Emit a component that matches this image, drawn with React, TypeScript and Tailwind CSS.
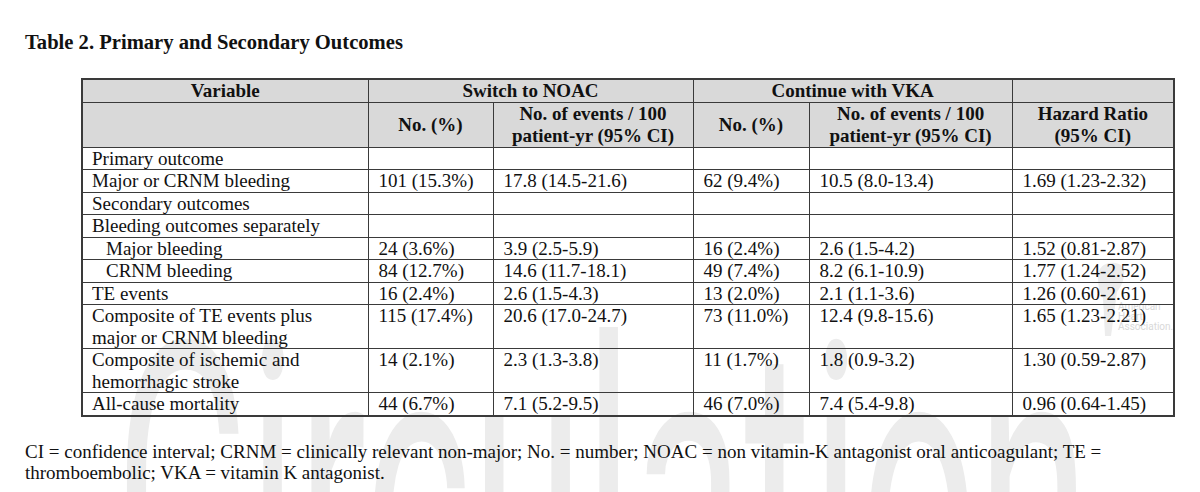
const rows: { label: string[]; indent?: boolean; vals: string[] }[] = [
  { label: ["Primary outcome"], vals: ["", "", "", "", ""] },
  { label: ["Major or CRNM bleeding"], vals: ["101 (15.3%)", "17.8 (14.5-21.6)", "62 (9.4%)", "10.5 (8.0-13.4)", "1.69 (1.23-2.32)"] },
  { label: ["Secondary outcomes"], vals: ["", "", "", "", ""] },
  { label: ["Bleeding outcomes separately"], vals: ["", "", "", "", ""] },
  { label: ["Major bleeding"], indent: true, vals: ["24 (3.6%)", "3.9 (2.5-5.9)", "16 (2.4%)", "2.6 (1.5-4.2)", "1.52 (0.81-2.87)"] },
  { label: ["CRNM bleeding"], indent: true, vals: ["84 (12.7%)", "14.6 (11.7-18.1)", "49 (7.4%)", "8.2 (6.1-10.9)", "1.77 (1.24-2.52)"] },
  { label: ["TE events"], vals: ["16 (2.4%)", "2.6 (1.5-4.3)", "13 (2.0%)", "2.1 (1.1-3.6)", "1.26 (0.60-2.61)"] },
  { label: ["Composite of TE events plus", "major or CRNM bleeding"], vals: ["115 (17.4%)", "20.6 (17.0-24.7)", "73 (11.0%)", "12.4 (9.8-15.6)", "1.65 (1.23-2.21)"] },
  { label: ["Composite of ischemic and", "hemorrhagic stroke"], vals: ["14 (2.1%)", "2.3 (1.3-3.8)", "11 (1.7%)", "1.8 (0.9-3.2)", "1.30 (0.59-2.87)"] },
  { label: ["All-cause mortality"], vals: ["44 (6.7%)", "7.1 (5.2-9.5)", "46 (7.0%)", "7.4 (5.4-9.8)", "0.96 (0.64-1.45)"] },
];

export default function App() {
  return (
    <div className="relative w-[1200px] h-[492px] overflow-hidden bg-white text-[#111] font-['Liberation_Serif']">
      {/* watermark */}
      <div className="pointer-events-none absolute left-[115px] top-[291px] origin-left scale-x-[0.51] whitespace-nowrap font-['Roboto'] text-[400px] leading-none text-[#ececec]">
        Circulation
      </div>
      {/* AHA logo watermark */}
      <svg className="pointer-events-none absolute left-[1092px] top-[258px]" width="36" height="80" viewBox="0 0 36 80">
        <path d="M6 18 C6 7 17 2 27 6 C35 10 33 24 25 34 L19 78 L13 78 L11 40 C7 34 6 27 6 18 Z" fill="#ececec" />
      </svg>
      <div className="pointer-events-none absolute left-[1118px] top-[302px] font-['Roboto'] text-[10px] leading-[10px] text-[#d9d9d9]">
        American
        <br />
        Heart
        <br />
        Association.
      </div>

      <div className="relative pl-[25px] pt-[30px]">
        <h1 className="text-[20.6px] font-bold leading-[24px]">Table 2. Primary and Secondary Outcomes</h1>

        <table className="ml-[56px] mt-[24px] w-[1092px] table-fixed border-collapse border-2 border-[#3a3a3a] text-[19px] leading-[21.5px]">
          <colgroup>
            <col className="w-[286px]" />
            <col className="w-[125px]" />
            <col className="w-[200px]" />
            <col className="w-[116px]" />
            <col className="w-[203px]" />
            <col className="w-[162px]" />
          </colgroup>
          <thead className="bg-[#d9d9d9]">
            <tr className="h-[23px]">
              <th className="border border-[#3a3a3a] p-0 font-bold">Variable</th>
              <th colSpan={2} className="border border-[#3a3a3a] p-0 font-bold">Switch to NOAC</th>
              <th colSpan={2} className="border border-[#3a3a3a] p-0 font-bold">Continue with VKA</th>
              <th className="border border-[#3a3a3a] p-0"></th>
            </tr>
            <tr className="h-[45px]">
              <th className="border border-[#3a3a3a] p-0"></th>
              <th className="border border-[#3a3a3a] p-0 font-bold">No. (%)</th>
              <th className="border border-[#3a3a3a] p-0 font-bold">
                No. of events / 100
                <br />
                patient-yr (95% CI)
              </th>
              <th className="border border-[#3a3a3a] p-0 font-bold">No. (%)</th>
              <th className="border border-[#3a3a3a] p-0 font-bold">
                No. of events / 100
                <br />
                patient-yr (95% CI)
              </th>
              <th className="border border-[#3a3a3a] p-0 font-bold">
                Hazard Ratio
                <br />
                (95% CI)
              </th>
            </tr>
          </thead>
          <tbody>
            {rows.map((row, i) => (
              <tr key={i}>
                <td className={`border border-[#3a3a3a] py-0 pr-1 align-top ${row.indent ? "pl-[23px]" : "pl-[9px]"}`}>
                  {row.label.map((l, j) => (
                    <div key={j}>{l}</div>
                  ))}
                </td>
                {row.vals.map((v, j) => (
                  <td key={j} className="border border-[#3a3a3a] py-0 pl-[10px] align-top whitespace-nowrap">
                    {v}
                  </td>
                ))}
              </tr>
            ))}
          </tbody>
        </table>

        <p className="mt-[24px] text-[19px] leading-[21px]">
          CI = confidence interval; CRNM = clinically relevant non-major; No. = number; NOAC = non vitamin-K antagonist oral anticoagulant; TE =
          <br />
          thromboembolic; VKA = vitamin K antagonist.
        </p>
      </div>
    </div>
  );
}
